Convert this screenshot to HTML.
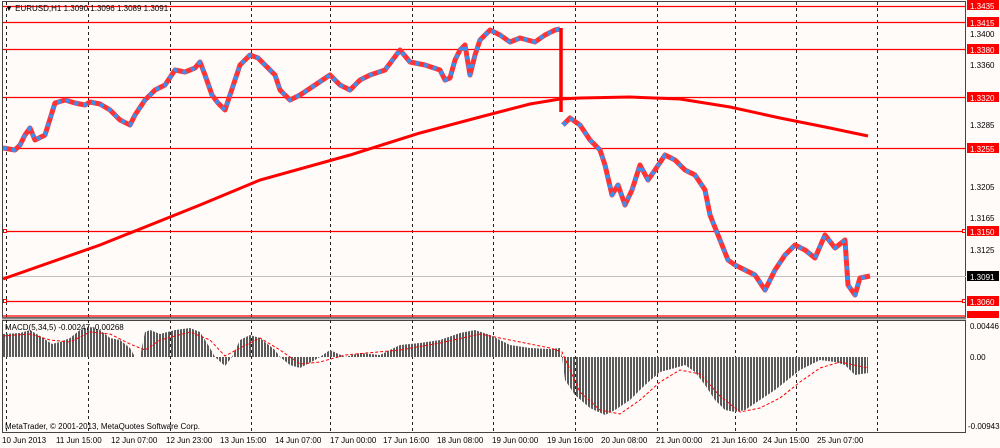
<!DOCTYPE html>
<html><head><meta charset="utf-8"><style>
html,body{margin:0;padding:0;background:#fffbf9;}
svg{display:block;font-family:"Liberation Sans",sans-serif;}
</style></head><body>
<svg width="1000" height="448" viewBox="0 0 1000 448" xmlns="http://www.w3.org/2000/svg">
<defs>
<pattern id="bars" width="3" height="4" patternUnits="userSpaceOnUse"><rect x="0" y="0" width="2" height="4" fill="#5a5a5a"/></pattern>
</defs>
<rect width="1000" height="448" fill="#fffbf9"/>
<rect x="2.5" y="1.5" width="963" height="316" fill="none" stroke="#444" stroke-width="1"/>
<rect x="2.5" y="320.5" width="963" height="112" fill="none" stroke="#444" stroke-width="1"/>
<line x1="2" y1="318.5" x2="966" y2="318.5" stroke="#888" stroke-width="2"/>
<g stroke="#222" stroke-width="1" stroke-dasharray="3,3">
<line x1="6.5" y1="2" x2="6.5" y2="432"/><line x1="88.5" y1="2" x2="88.5" y2="432"/>
<line x1="170.5" y1="2" x2="170.5" y2="432"/><line x1="251.5" y1="2" x2="251.5" y2="432"/>
<line x1="330.5" y1="2" x2="330.5" y2="432"/><line x1="412.5" y1="2" x2="412.5" y2="432"/>
<line x1="493.5" y1="2" x2="493.5" y2="432"/><line x1="575.5" y1="2" x2="575.5" y2="432"/>
<line x1="657.5" y1="2" x2="657.5" y2="432"/><line x1="735.5" y1="2" x2="735.5" y2="432"/>
<line x1="796.5" y1="2" x2="796.5" y2="432"/><line x1="877.5" y1="2" x2="877.5" y2="432"/>
</g>
<g stroke="#f00" stroke-width="1.3">
<line x1="3" y1="6.5" x2="966" y2="6.5"/><line x1="3" y1="22.5" x2="966" y2="22.5"/>
<line x1="3" y1="49.5" x2="966" y2="49.5"/><line x1="3" y1="97.5" x2="966" y2="97.5"/>
<line x1="3" y1="148.5" x2="966" y2="148.5"/><line x1="3" y1="231.5" x2="966" y2="231.5"/>
<line x1="3" y1="301.5" x2="966" y2="301.5"/><line x1="3" y1="316" x2="966" y2="316"/>
</g>
<line x1="3" y1="276.5" x2="966" y2="276.5" stroke="#c0c0c0"/>
<rect x="3.5" y="229.5" width="3" height="3" fill="#fff" stroke="#f00"/>
<rect x="3.5" y="299.5" width="3" height="3" fill="#fff" stroke="#f00"/>
<rect x="962.5" y="229.5" width="3" height="3" fill="#fff" stroke="#f00"/>
<rect x="962.5" y="299.5" width="3" height="3" fill="#fff" stroke="#f00"/>
<polyline fill="none" stroke="#f00" stroke-width="3" points="3,279 100,245 200,205 260,180 350,155 420,133 480,117 530,104 560,99 580,98 630,97 680,99 730,107 780,118 830,128 868,136"/>
<g fill="none" stroke-width="5" stroke-linejoin="round">
<polyline stroke="#f33" points="3,148 15,150 20,145 25,135 30,128 35,140 45,135 55,103 65,100 75,103 85,105 90,102 100,104 110,110 120,120 130,125 135,115 145,100 155,90 165,85 175,70 185,72 195,68 200,62 205,75 212,95 218,103 225,110 230,95 240,65 250,55 258,58 265,65 275,75 280,90 290,100 300,95 315,85 330,75 340,85 350,90 360,80 370,75 385,70 400,50 410,62 425,65 440,70 445,80 450,78 455,60 460,50 465,45 470,75 475,55 480,40 490,30 500,35 510,42 520,38 535,42 545,35 555,30 560,29"/>
<polyline stroke="#3b8ff0" stroke-width="4" stroke-dasharray="4,5" points="3,148 15,150 20,145 25,135 30,128 35,140 45,135 55,103 65,100 75,103 85,105 90,102 100,104 110,110 120,120 130,125 135,115 145,100 155,90 165,85 175,70 185,72 195,68 200,62 205,75 212,95 218,103 225,110 230,95 240,65 250,55 258,58 265,65 275,75 280,90 290,100 300,95 315,85 330,75 340,85 350,90 360,80 370,75 385,70 400,50 410,62 425,65 440,70 445,80 450,78 455,60 460,50 465,45 470,75 475,55 480,40 490,30 500,35 510,42 520,38 535,42 545,35 555,30 560,29"/>
<polyline stroke="#f00" stroke-width="3.5" points="561,28 561,112"/>
<polyline stroke="#f33" points="563,125 570,118 580,125 590,140 600,150 605,165 612,195 618,185 625,205 632,190 640,165 648,180 655,170 665,155 675,160 685,170 695,175 705,190 710,215 716,230 722,245 728,260 735,265 745,270 755,275 765,290 775,270 785,255 795,245 805,250 815,258 825,235 835,248 845,240 848,285 855,295 860,278 870,276"/>
<polyline stroke="#3b8ff0" stroke-width="4" stroke-dasharray="4,6" points="563,125 570,118 580,125 590,140 600,150 605,165 612,195 618,185 625,205 632,190 640,165 648,180 655,170 665,155 675,160 685,170 695,175 705,190 710,215 716,230 722,245 728,260 735,265 745,270 755,275 765,290 775,270 785,255 795,245 805,250 815,258 825,235 835,248 845,240 848,285 855,295 860,278 870,276"/>
</g>
<polygon fill="url(#bars)" points="3,357 3,334 20,333 30,330 40,336 52,344 60,342 70,338 80,330 90,327 100,330 110,338 120,340 130,348 135,357 140,357 145,332 150,330 160,334 175,330 190,328 200,332 210,348 215,357 225,366 232,357 240,340 250,335 260,338 275,350 280,357 290,365 300,368 315,360 320,357 330,350 345,357 360,353 380,355 400,345 420,343 440,340 460,333 475,330 490,335 510,345 530,348 550,349 560,348 562,357 565,380 575,395 590,408 605,415 615,410 630,400 645,385 660,372 675,368 685,365 695,372 705,385 715,400 725,410 735,412 745,410 760,400 775,390 790,378 800,370 810,365 820,360 835,362 845,365 855,375 868,373 868,357"/>
<polyline fill="none" stroke="#f00" stroke-width="1" stroke-dasharray="3,2" points="3,336 30,334 50,340 70,342 90,332 110,334 130,344 145,350 160,340 190,332 210,340 225,356 240,348 260,338 280,350 300,364 320,362 345,355 400,350 440,343 480,334 510,340 550,348 562,352 580,392 600,410 620,414 640,400 660,382 680,370 700,374 720,396 740,412 760,408 780,398 800,382 820,368 840,362 868,368"/>
<g font-size="8" fill="#000">
<text x="5" y="330">MACD(5,34,5) -0.00247 -0.00268</text>
<text x="5" y="429">MetaTrader, © 2001-2013, MetaQuotes Software Corp.</text>
<text x="5" y="11">▼ EURUSD,H1  1.3090  1.3096  1.3089  1.3091</text>
<text x="970" y="37">1.3400</text><text x="970" y="68">1.3360</text>
<text x="970" y="128">1.3285</text><text x="970" y="190">1.3205</text>
<text x="970" y="221">1.3165</text><text x="970" y="253">1.3125</text>
<text x="970" y="329">0.00446</text><text x="970" y="360">0.00</text><text x="968" y="429">-0.00943</text>
</g>
<g font-size="8" fill="#fff">
<rect x="967" y="0" width="32" height="10" fill="#f00"/><text x="970" y="9">1.3435</text>
<rect x="967" y="17" width="32" height="10" fill="#f00"/><text x="970" y="26">1.3415</text>
<rect x="967" y="44" width="32" height="10" fill="#f00"/><text x="970" y="53">1.3380</text>
<rect x="967" y="92" width="32" height="10" fill="#f00"/><text x="970" y="101">1.3320</text>
<rect x="967" y="143" width="32" height="10" fill="#f00"/><text x="970" y="152">1.3255</text>
<rect x="967" y="226" width="32" height="10" fill="#f00"/><text x="970" y="235">1.3150</text>
<rect x="967" y="271" width="32" height="10" fill="#000"/><text x="970" y="280">1.3091</text>
<rect x="967" y="296" width="32" height="10" fill="#f00"/><text x="970" y="305">1.3060</text>
<rect x="967" y="311" width="32" height="7" fill="#f00"/>
</g>
<g font-size="8" fill="#000">
<text x="2" y="443">10 Jun 2013</text><text x="56" y="443">11 Jun 15:00</text>
<text x="111" y="443">12 Jun 07:00</text><text x="166" y="443">12 Jun 23:00</text>
<text x="220" y="443">13 Jun 15:00</text><text x="275" y="443">14 Jun 07:00</text>
<text x="330" y="443">17 Jun 00:00</text><text x="383" y="443">17 Jun 16:00</text>
<text x="437" y="443">18 Jun 08:00</text><text x="492" y="443">19 Jun 00:00</text>
<text x="547" y="443">19 Jun 16:00</text><text x="601" y="443">20 Jun 08:00</text>
<text x="656" y="443">21 Jun 00:00</text><text x="711" y="443">21 Jun 16:00</text>
<text x="763" y="443">24 Jun 15:00</text><text x="817" y="443">25 Jun 07:00</text>
</g>
</svg>
</body></html>
